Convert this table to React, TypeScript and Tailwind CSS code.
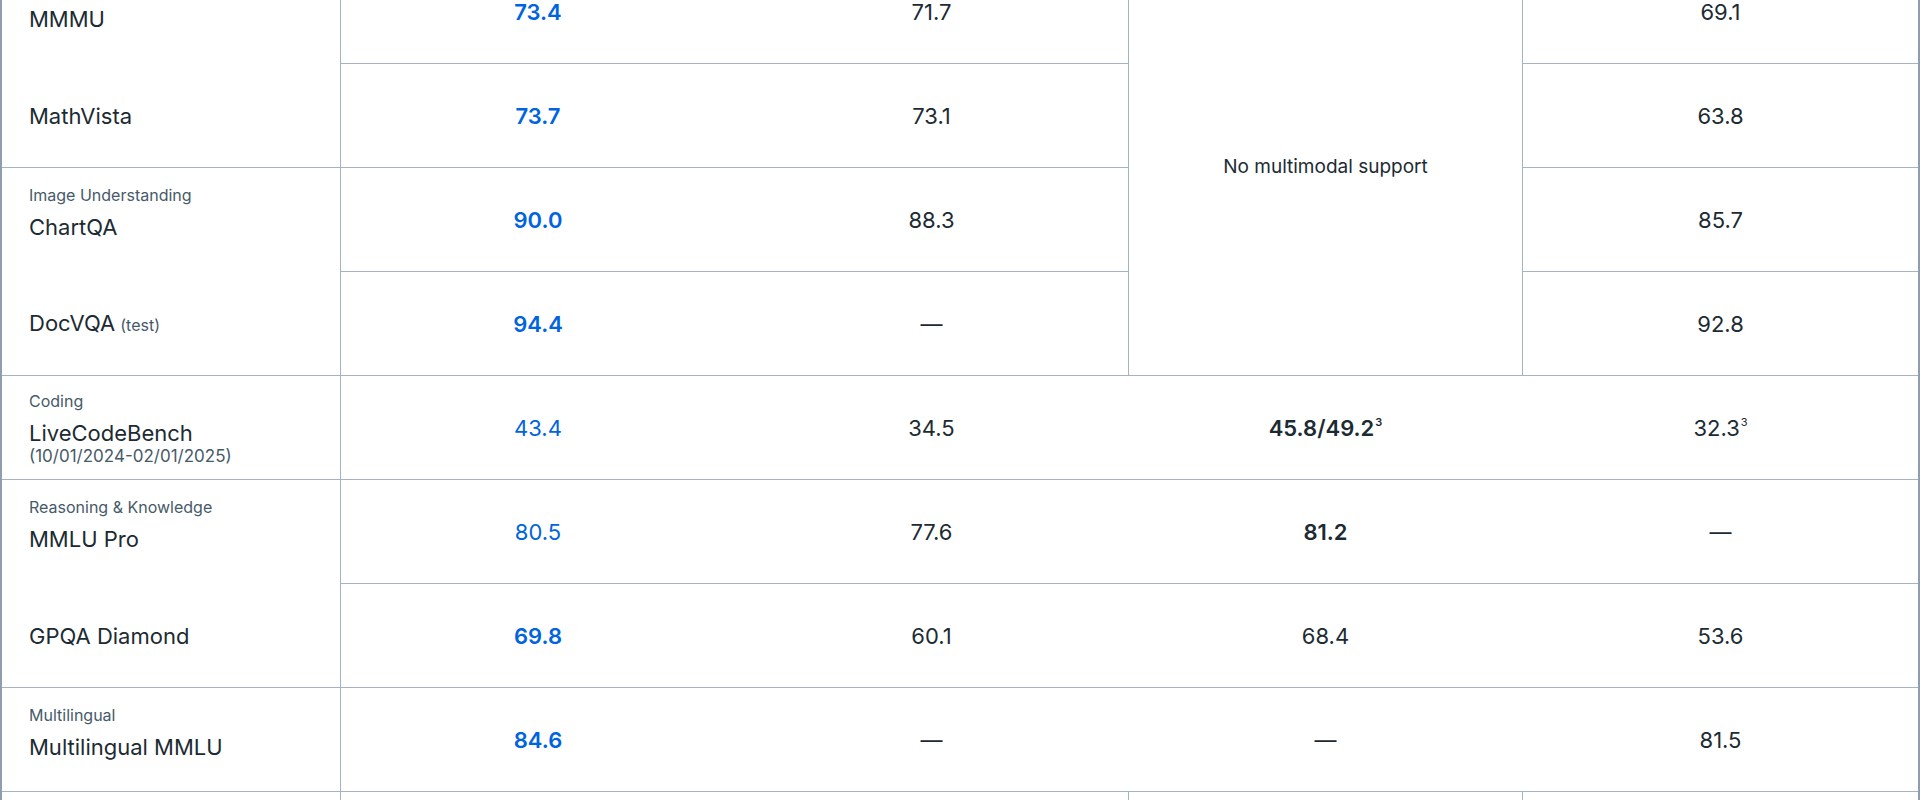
type Cell = {
  text: string;
  sup?: string;
  tone?: "blue" | "blueBold" | "bold" | "plain";
};

type Row = {
  category?: string;
  name: string;
  note?: string;
  sub?: string;
  groupEnd: boolean;
  cells: (Cell | null)[];
};

const rows: Row[] = [
  {
    category: "Image Reasoning",
    name: "MMMU",
    groupEnd: false,
    cells: [{ text: "73.4", tone: "blueBold" }, { text: "71.7" }, null, { text: "69.1" }],
  },
  {
    name: "MathVista",
    groupEnd: true,
    cells: [{ text: "73.7", tone: "blueBold" }, { text: "73.1" }, null, { text: "63.8" }],
  },
  {
    category: "Image Understanding",
    name: "ChartQA",
    groupEnd: false,
    cells: [{ text: "90.0", tone: "blueBold" }, { text: "88.3" }, null, { text: "85.7" }],
  },
  {
    name: "DocVQA",
    note: "(test)",
    groupEnd: true,
    cells: [{ text: "94.4", tone: "blueBold" }, { text: "—" }, null, { text: "92.8" }],
  },
  {
    category: "Coding",
    name: "LiveCodeBench",
    sub: "(10/01/2024-02/01/2025)",
    groupEnd: true,
    cells: [
      { text: "43.4", tone: "blue" },
      { text: "34.5" },
      { text: "45.8/49.2", sup: "3", tone: "bold" },
      { text: "32.3", sup: "3" },
    ],
  },
  {
    category: "Reasoning & Knowledge",
    name: "MMLU Pro",
    groupEnd: false,
    cells: [{ text: "80.5", tone: "blue" }, { text: "77.6" }, { text: "81.2", tone: "bold" }, { text: "—" }],
  },
  {
    name: "GPQA Diamond",
    groupEnd: true,
    cells: [{ text: "69.8", tone: "blueBold" }, { text: "60.1" }, { text: "68.4" }, { text: "53.6" }],
  },
  {
    category: "Multilingual",
    name: "Multilingual MMLU",
    groupEnd: true,
    cells: [{ text: "84.6", tone: "blueBold" }, { text: "—" }, { text: "—" }, { text: "81.5" }],
  },
];

const toneClass = (tone?: Cell["tone"]) => {
  if (tone === "blueBold") return "text-[#0064e0] font-semibold";
  if (tone === "blue") return "text-[#0064e0]";
  if (tone === "bold") return "text-[#1c2b33] font-semibold";
  return "text-[#1c2b33]";
};

const Label = ({ row }: { row: Row }) => {
  let pad = "";
  if (row.category && !row.sub) pad = "pb-[13px]";
  if (row.sub) pad = "pt-[3px]";
  return (
    <div
      className={`flex flex-col justify-center pl-[27px] border-r border-[#a5b3c1] ${
        row.groupEnd ? "border-b" : ""
      } ${pad}`}
    >
      {row.category && (
        <div className="text-[16px] leading-[18px] text-[#465a69] mb-[9px]">{row.category}</div>
      )}
      <div className="text-[22px] leading-[28px] text-[#1c2b33]">
        {row.name}
        {row.note && <span className="text-[16px] text-[#465a69] ml-[5px]">{row.note}</span>}
      </div>
      {row.sub && <div className="text-[17px] leading-[19px] text-[#465a69]">{row.sub}</div>}
    </div>
  );
};

const Value = ({ cell }: { cell: Cell }) => (
  <div className="flex items-center justify-center border-b border-[#a5b3c1]">
    <span className={`text-[22px] leading-[28px] ${toneClass(cell.tone)}`}>
      {cell.text}
      {cell.sup && <sup className="text-[11px] ml-[1px] -top-[0.9em]">{cell.sup}</sup>}
    </span>
  </div>
);

const App: React.FC = () => {
  return (
    <div className="w-[1920px] h-[800px] overflow-hidden bg-white" style={{ fontFamily: "Inter, 'Noto Sans', sans-serif" }}>
      <div className="-mt-[40px] border-x-2 border-[#8e9eae] grid grid-cols-[339px_394px_393px_395px_1fr] auto-rows-[104px]">
        {rows.map((row, i) => (
          <div key={row.name} className="contents">
            <Label row={row} />
            {row.cells.map((cell, j) => {
              if (cell) return <Value key={j} cell={cell} />;
              if (i === 0)
                return (
                  <div
                    key={j}
                    className="row-span-4 flex items-center justify-center border-x border-b border-[#a5b3c1] text-[19px] text-[#1c2b33]"
                  >
                    No multimodal support
                  </div>
                );
              return null;
            })}
          </div>
        ))}
        <div className="border-r border-[#a5b3c1]" />
        <div />
        <div />
        <div className="border-x border-[#a5b3c1]" />
        <div />
      </div>
    </div>
  );
};

export default App;
